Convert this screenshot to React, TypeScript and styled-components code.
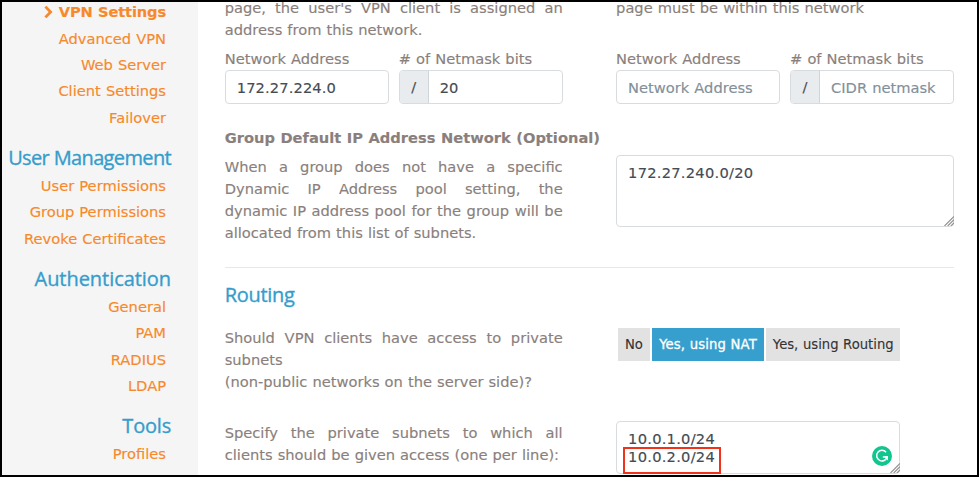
import React from 'react';
import styled, { createGlobalStyle } from 'styled-components';

const GlobalStyle = createGlobalStyle`
  *, *::before, *::after { box-sizing: border-box; }
  html, body { margin: 0; overflow: hidden; background: #fff; }
  body {
    font-family: "DejaVu Sans", Verdana, sans-serif;
    font-size: 14.67px;
    line-height: 22px;
    word-spacing: 0.4px;
    color: #8a7f7d;
    -webkit-text-stroke: 0.15px currentColor;
  }
  input, textarea, button { font: inherit; word-spacing: inherit; }
`;

const Frame = styled.div`
  display: flex;
  width: 979px;
  height: 477px;
  border: 2px solid #000;
  overflow: hidden;
  background: #fff;
`;

const Sidebar = styled.nav`
  flex: 0 0 196px;
  padding-right: 27px;
  background: #f5f5f5;
  text-align: right;
  white-space: nowrap;
`;

const NavList = styled.ul<{ $first?: boolean }>`
  list-style: none;
  margin: ${(p) => (p.$first ? '-2.9px' : '0')} 0 12.9px;
  padding: 0 5px 0 0;
`;

const NavItem = styled.li<{ $active?: boolean }>`
  display: flex;
  align-items: center;
  justify-content: flex-end;
  gap: 6px;
  height: 26.4px;
  color: #f6892b;
  font-weight: ${(p) => (p.$active ? 700 : 400)};
  letter-spacing: ${(p) => (p.$active ? '-0.15px' : '0')};
`;

const Heading = styled.h2<{ $spacing: number }>`
  margin: 0;
  height: 28.8px;
  font-family: "Open Sans", "Trebuchet MS", sans-serif;
  font-size: 20px;
  font-weight: 400;
  line-height: 28.8px;
  word-spacing: 0;
  letter-spacing: ${(p) => p.$spacing}px;
  color: #359dcc;
  -webkit-text-stroke: 0.35px #359dcc;
`;

const Main = styled.main`
  flex: 1;
  min-width: 0;
  padding-left: 26.7px;
`;

const Row = styled.section<{ $gapAbove?: number }>`
  display: grid;
  grid-template-columns: 338px 338px;
  column-gap: 53.4px;
  margin-top: ${(p) => p.$gapAbove ?? 0}px;
`;

const Copy = styled.p<{ $height?: number }>`
  margin: 0;
  text-align: justify;
  height: ${(p) => (p.$height ? `${p.$height}px` : 'auto')};
`;

const FieldPair = styled.div`
  display: grid;
  grid-template-columns: 164.4px 164px;
  column-gap: 9.6px;
`;

const Field = styled.label`
  display: flex;
  flex-direction: column;
  white-space: nowrap;
`;

const FieldLabel = styled.span`
  height: 21.9px;
`;

const InputGroup = styled.span`
  display: flex;
  height: 34.6px;
  border: 1px solid #d9dcde;
  border-radius: 4px;
  overflow: hidden;
  background: #fff;
`;

const Addon = styled.span`
  flex: 0 0 29px;
  display: flex;
  align-items: center;
  justify-content: center;
  background: #e9ecef;
  border-right: 1px solid #d0d5d9;
  color: #495057;
`;

const TextInput = styled.input`
  flex: 1;
  min-width: 0;
  padding: 1px 11px 0;
  border: 0;
  outline: 0;
  background: transparent;
  color: #434b53;
  letter-spacing: 0.12px;
  &::placeholder { color: #82909a; opacity: 1; letter-spacing: 0; }
`;

const Subtitle = styled.h3`
  margin: 22.5px 0 7px;
  font-size: 14.67px;
  font-weight: 700;
  line-height: 22px;
  white-space: nowrap;
`;

const AreaBox = styled.div<{ $width: number; $height: number; $top?: number }>`
  position: relative;
  width: ${(p) => p.$width}px;
  height: ${(p) => p.$height}px;
  margin-top: ${(p) => p.$top ?? 0}px;
  border: 1px solid #d9dcde;
  border-radius: 4px;
  background: #fff;
`;

const TextArea = styled.textarea<{ $line: number; $pad: number }>`
  display: block;
  width: 100%;
  height: 100%;
  padding: ${(p) => p.$pad}px 11px 0;
  border: 0;
  outline: 0;
  resize: none;
  overflow: hidden;
  background: transparent;
  color: #434b53;
  line-height: ${(p) => p.$line}px;
  letter-spacing: 0.25px;
`;

const Grip = styled.svg`
  position: absolute;
  right: -1px;
  bottom: 0;
`;

const Badge = styled.svg`
  position: absolute;
  right: 7.5px;
  bottom: 7px;
`;

const Highlight = styled.div`
  position: absolute;
  left: 6px;
  top: 25px;
  width: 98px;
  height: 27px;
  border: 2px solid #f0321a;
`;

const Divider = styled.hr`
  width: 729px;
  height: 1px;
  margin: 23.4px 0 12.5px;
  border: 0;
  background: #e8e8e8;
`;

const Segments = styled.div`
  display: flex;
  gap: 2.5px;
  height: 33px;
  margin: 1px 0 0 1.7px;
`;

const Segment = styled.button<{ $width: number; $active?: boolean; $track?: number }>`
  width: ${(p) => p.$width}px;
  padding: 1px 0 0;
  border: 0;
  font-size: 13.2px;
  white-space: nowrap;
  letter-spacing: ${(p) => p.$track ?? 0}px;
  background: ${(p) => (p.$active ? '#379fcd' : '#e2e2e2')};
  color: ${(p) => (p.$active ? '#fff' : '#333')};
  -webkit-text-stroke: ${(p) => (p.$active ? '0.3px #fff' : '0.1px #333')};
`;

const groups = [
  { title: 'User Management', spacing: -0.64, items: ['User Permissions', 'Group Permissions', 'Revoke Certificates'] },
  { title: 'Authentication', spacing: -0.05, items: ['General', 'PAM', 'RADIUS', 'LDAP'] },
  { title: 'Tools', spacing: -0.2, items: ['Profiles'] },
];

function ResizeGrip() {
  return (
    <Grip width="10" height="10" viewBox="0 0 10 10" stroke="#8f8f8f" strokeWidth="1.1" fill="none">
      <path d="M0.5 10 L10 0.5 M3.7 10 L10 3.7 M6.9 10 L10 6.9" />
    </Grip>
  );
}

function NetworkFields({ address, bits }: { address?: string; bits?: string }) {
  return (
    <FieldPair>
      <Field>
        <FieldLabel>Network Address</FieldLabel>
        <InputGroup>
          <TextInput defaultValue={address} placeholder="Network Address" />
        </InputGroup>
      </Field>
      <Field>
        <FieldLabel># of Netmask bits</FieldLabel>
        <InputGroup>
          <Addon>/</Addon>
          <TextInput defaultValue={bits} placeholder="CIDR netmask" />
        </InputGroup>
      </Field>
    </FieldPair>
  );
}

export default function App() {
  return (
    <>
      <GlobalStyle />
      <Frame>
        <Sidebar>
          <NavList $first>
            <NavItem $active>
              <svg width="9" height="14" viewBox="0 0 9 14" fill="none" stroke="#f6892b" strokeWidth="2.8">
                <path d="M1.4 1.6 L6.6 7 L1.4 12.4" />
              </svg>
              VPN Settings
            </NavItem>
            {['Advanced VPN', 'Web Server', 'Client Settings', 'Failover'].map((item) => (
              <NavItem key={item}>{item}</NavItem>
            ))}
          </NavList>
          {groups.map((group) => (
            <React.Fragment key={group.title}>
              <Heading $spacing={group.spacing}>{group.title}</Heading>
              <NavList>
                {group.items.map((item) => (
                  <NavItem key={item}>{item}</NavItem>
                ))}
              </NavList>
            </React.Fragment>
          ))}
        </Sidebar>
        <Main>
          <Row $gapAbove={-5}>
            <div>
              <Copy $height={51}>page, the user's VPN client is assigned an address from this network.</Copy>
              <NetworkFields address="172.27.224.0" bits="20" />
            </div>
            <div>
              <Copy $height={51}>page must be within this network</Copy>
              <NetworkFields />
            </div>
          </Row>
          <Row>
            <div>
              <Subtitle>Group Default IP Address Network (Optional)</Subtitle>
              <Copy>
                When a group does not have a specific Dynamic IP Address pool setting, the dynamic IP address pool
                for the group will be allocated from this list of subnets.
              </Copy>
            </div>
            <AreaBox $width={338} $height={71.5} $top={51}>
              <TextArea $line={22} $pad={6} defaultValue="172.27.240.0/20" />
              <ResizeGrip />
            </AreaBox>
          </Row>
          <Divider />
          <Heading $spacing={-0.3}>Routing</Heading>
          <Row $gapAbove={17.5}>
            <Copy>
              Should VPN clients have access to private subnets
              <br />
              (non-public networks on the server side)?
            </Copy>
            <Segments>
              <Segment $width={32} $track={-0.1}>No</Segment>
              <Segment $width={111.5} $active $track={0.1}>Yes, using NAT</Segment>
              <Segment $width={134}>Yes, using Routing</Segment>
            </Segments>
          </Row>
          <Row $gapAbove={28.8}>
            <Copy>Specify the private subnets to which all clients should be given access (one per line):</Copy>
            <AreaBox $width={284} $height={53} $top={-1}>
              <TextArea $line={18} $pad={8} defaultValue={'10.0.1.0/24\n10.0.2.0/24'} />
              <Highlight />
              <Badge width="20" height="20" viewBox="0 0 20 20" fill="none">
                <circle cx="10" cy="10" r="10" fill="#11c58f" />
                <path d="M14.1 6.3 A5.3 5.3 0 1 0 15.1 11 H10.8" stroke="#fff" strokeWidth="1.5" />
                <path d="M12.2 10.3 H15.9 V14.4 Z" fill="#fff" />
              </Badge>
              <ResizeGrip />
            </AreaBox>
          </Row>
        </Main>
      </Frame>
    </>
  );
}
